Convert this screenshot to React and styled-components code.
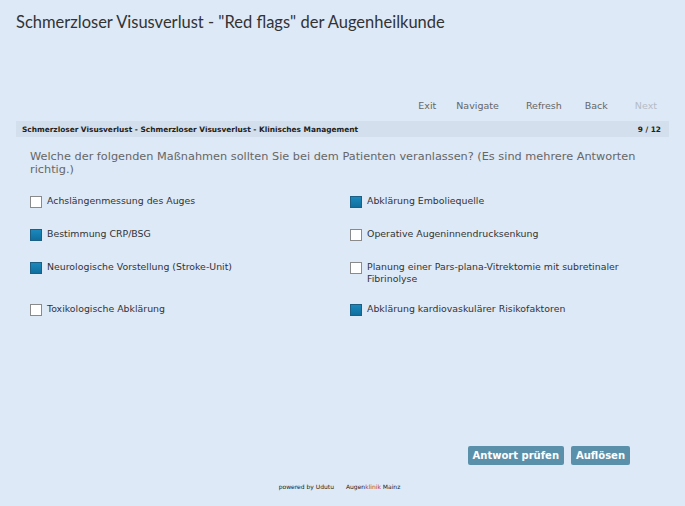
import React, { useState } from 'react';
import styled, { createGlobalStyle } from 'styled-components';

const GlobalStyle = createGlobalStyle`
  html, body {
    margin: 0;
    padding: 0;
    background: #dde9f7;
  }
`;

const Page = styled.div`
  height: 506px;
  display: flex;
  flex-direction: column;
  padding: 0 16px;
  box-sizing: border-box;
  font-family: 'DejaVu Sans', Verdana, sans-serif;
`;

const Title = styled.h1`
  margin: 0;
  padding-top: 12px;
  height: 34px;
  font-family: 'Lato', 'Noto Sans', sans-serif;
  font-weight: 400;
  font-size: 16.5px;
  color: #333333;
`;

const Nav = styled.div`
  display: flex;
  justify-content: flex-end;
  align-items: center;
  margin-top: 50px;
  height: 18px;
  padding-right: 12px;
`;

const NavLink = styled.a`
  font-size: 9.5px;
  color: ${({ disabled }) => (disabled ? '#b5bcc4' : '#666666')};
  margin-left: ${({ gap }) => gap}px;
  text-decoration: none;
  cursor: ${({ disabled }) => (disabled ? 'default' : 'pointer')};
`;

const Bar = styled.div`
  margin-top: 7px;
  height: 16px;
  background: #d3dfec;
  display: flex;
  justify-content: space-between;
  align-items: center;
  padding: 0 8px 0 6px;
  font-size: 7.4px;
  font-weight: 700;
  color: #222222;
`;

const Question = styled.p`
  margin: 13px 0 0 14px;
  font-size: 11.3px;
  line-height: 13px;
  color: #666666;
`;

const Options = styled.div`
  display: grid;
  grid-template-columns: 320px 1fr;
  row-gap: 17px;
  margin: 18px 0 0 14px;
`;

const Option = styled.label`
  display: flex;
  align-items: flex-start;
  font-size: 9.4px;
  line-height: 12px;
  color: #333333;
  cursor: pointer;
  & span.text {
    padding-top: 1px;
  }
`;

const Box = styled.span`
  flex: none;
  width: 10px;
  height: 10px;
  margin: 2px 5px 2px 0;
  border: 1px solid ${({ checked }) => (checked ? '#1c5f82' : '#8a8a8a')};
  background: ${({ checked }) =>
    checked ? 'linear-gradient(#1b88bd, #0f6f9f)' : '#ffffff'};
`;

const Spacer = styled.div`
  flex: 1;
`;

const Actions = styled.div`
  display: flex;
  justify-content: flex-end;
  gap: 7px;
  padding-right: 39px;
`;

const Button = styled.button`
  height: 19px;
  padding: 0 5px;
  border: none;
  border-radius: 2px;
  background: #5b90ab;
  color: #ffffff;
  font-family: 'DejaVu Sans', Verdana, sans-serif;
  font-size: 10px;
  font-weight: 700;
  cursor: pointer;
`;

const Footer = styled.div`
  display: flex;
  justify-content: center;
  gap: 12px;
  height: 41px;
  padding: 18px 6px 0 0;
  box-sizing: border-box;
  font-size: 6px;
  color: #222222;
  & em {
    font-style: normal;
    color: #c0392b;
  }
`;

const initial = [
  { label: 'Achslängenmessung des Auges', checked: false },
  { label: 'Abklärung Emboliequelle', checked: true },
  { label: 'Bestimmung CRP/BSG', checked: true },
  { label: 'Operative Augeninnendrucksenkung', checked: false },
  { label: 'Neurologische Vorstellung (Stroke-Unit)', checked: true },
  { label: 'Planung einer Pars-plana-Vitrektomie mit subretinaler Fibrinolyse', checked: false },
  { label: 'Toxikologische Abklärung', checked: false },
  { label: 'Abklärung kardiovaskulärer Risikofaktoren', checked: true },
];

function App() {
  const [answers, setAnswers] = useState(initial);

  const toggle = (i) => {
    setAnswers(answers.map((a, j) => (j === i ? { ...a, checked: !a.checked } : a)));
  };

  return (
    <Page>
      <GlobalStyle />
      <Title>Schmerzloser Visusverlust - "Red flags" der Augenheilkunde</Title>
      <Nav>
        <NavLink gap={0}>Exit</NavLink>
        <NavLink gap={20}>Navigate</NavLink>
        <NavLink gap={27}>Refresh</NavLink>
        <NavLink gap={23}>Back</NavLink>
        <NavLink gap={27} disabled>Next</NavLink>
      </Nav>
      <Bar>
        <span>Schmerzloser Visusverlust - Schmerzloser Visusverlust - Klinisches Management</span>
        <span>9 / 12</span>
      </Bar>
      <Question>
        Welche der folgenden Maßnahmen sollten Sie bei dem Patienten veranlassen? (Es sind mehrere Antworten richtig.)
      </Question>
      <Options>
        {answers.map((a, i) => (
          <Option key={a.label} onClick={() => toggle(i)}>
            <Box checked={a.checked} />
            <span className="text">{a.label}</span>
          </Option>
        ))}
      </Options>
      <Spacer />
      <Actions>
        <Button>Antwort prüfen</Button>
        <Button>Auflösen</Button>
      </Actions>
      <Footer>
        <span>powered by Udutu</span>
        <span>
          Augen<em>klinik</em> Mainz
        </span>
      </Footer>
    </Page>
  );
}

export default App;
